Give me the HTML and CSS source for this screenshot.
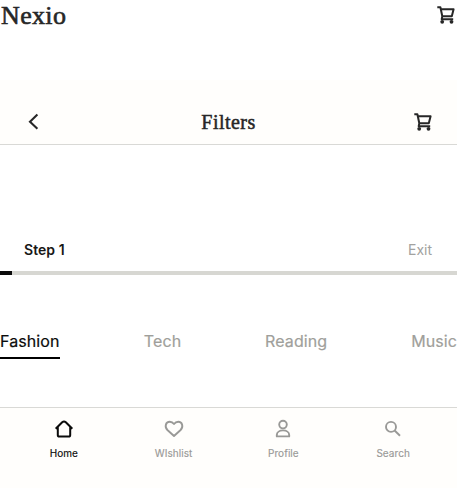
FILE: index.html
```html
<!DOCTYPE html>
<html lang="en">
<head>
<meta charset="utf-8">
<title>Nexio</title>
<link rel="stylesheet" href="styles.css">
</head>
<body>
<svg class="defs" width="0" height="0">
  <symbol id="cart" viewBox="0 0 18 18">
    <path d="M.3 1.2H3.4L5.3 10.3H14.8L16.6 3.2H4M5.3 10.3L4.7 13.2H16.2" fill="none" stroke="currentColor" stroke-width="2" stroke-linejoin="round"/>
    <circle cx="5.2" cy="15.8" r="1.9" fill="currentColor"/>
    <circle cx="14.5" cy="15.8" r="1.9" fill="currentColor"/>
  </symbol>
</svg>
<header class="brand-bar">
  <span class="brand">Nexio</span>
  <svg class="cart"><use href="#cart"/></svg>
</header>
<header class="title-bar">
  <svg class="back" viewBox="0 0 18 18"><path d="M12.4 1.6L5 8.7L12.4 15.8" fill="none" stroke="currentColor" stroke-width="2.1"/></svg>
  <h1 class="title">Filters</h1>
  <svg class="cart"><use href="#cart"/></svg>
</header>
<section class="step">
  <div class="step-row"><span class="step-name">Step 1</span><span class="exit">Exit</span></div>
  <div class="progress"><div class="progress-value"></div></div>
</section>
<nav class="tabs">
  <span class="tab active">Fashion</span>
  <span class="tab">Tech</span>
  <span class="tab">Reading</span>
  <span class="tab">Music</span>
</nav>
<nav class="bottom">
  <div class="item current">
    <svg class="icon" viewBox="0 0 20 20"><path d="M1.7 9.8L8.2 3.3Q10 1.7 11.8 3.3L18.3 9.8M3.8 8V15.9Q3.8 17.5 5.4 17.5H14.6Q16.2 17.5 16.2 15.9V8" stroke-width="2"/></svg>
    <span>Home</span>
  </div>
  <div class="item">
    <svg class="icon" viewBox="0 0 20 20"><path d="M10 17L3.4 11C.4 8 1.5 2.8 5.8 2.8C7.7 2.8 9 3.7 10 5C11 3.7 12.3 2.8 14.2 2.8C18.5 2.8 19.6 8 16.6 11Z"/></svg>
    <span>WIshlist</span>
  </div>
  <div class="item">
    <svg class="icon" viewBox="0 0 20 20"><circle cx="10" cy="5.6" r="3.8"/><path d="M3.8 17.4V16C3.8 13.2 6.6 11.4 10 11.4S16.2 13.2 16.2 16V17.4Z"/></svg>
    <span>Profile</span>
  </div>
  <div class="item">
    <svg class="icon" viewBox="0 0 20 20"><circle cx="8" cy="7.9" r="5"/><path d="M11.6 11.5L17 16.7"/></svg>
    <span>Search</span>
  </div>
</nav>
</body>
</html>
```
FILE: styles.css
```css
* { box-sizing: border-box; }
body { margin: 0; height: 488px; overflow: hidden; display: flex; flex-direction: column; background: #fff; color: #272727; font-family: Inter, sans-serif; }
svg { display: block; flex: none; }
.defs { position: absolute; }
.cart { width: 18px; height: 18px; }
.brand-bar { height: 80px; padding: 0 2px 0 1px; display: flex; justify-content: space-between; align-items: flex-start; }
.brand { font: 500 26px/32px "Liberation Serif", serif; letter-spacing: .35px; -webkit-text-stroke: .6px currentColor; }
.brand-bar .cart { margin-top: 6px; }
.title-bar { height: 65px; padding: 19px 25px 0; display: flex; justify-content: space-between; align-items: center; background: #fffefc; border-bottom: 1px solid #d9d9d6; }
.back { width: 18px; height: 18px; }
.title { margin: 0; font: 500 20px/24px "Liberation Serif", serif; letter-spacing: .45px; -webkit-text-stroke: .5px currentColor; }
.step { padding-top: 95px; }
.step-row { height: 31px; padding: 0 25px 0 24px; display: flex; justify-content: space-between; font-size: 14px; line-height: 20px; }
.step-name { font-weight: 600; color: #171717; letter-spacing: .05px; }
.exit { color: #a2a2a0; }
.progress { height: 4px; background: #d7d7d2; }
.progress-value { width: 11.5px; height: 4px; background: #0b0b0b; }
.tabs { margin-top: 56px; display: flex; justify-content: space-between; font-size: 16px; letter-spacing: .1px; -webkit-text-stroke: .2px currentColor; line-height: 20px; color: #9f9f9b; }
.tab { height: 28px; }
.active { width: 60px; color: #0b0b0b; border-bottom: 2px solid #000; }
.bottom { margin-top: 48px; flex: 1; padding: 11px 9px 0; display: grid; grid-template-columns: repeat(4, 1fr); background: #fffefc; border-top: 1px solid #d9d9d6; }
.item { display: flex; flex-direction: column; align-items: center; gap: 7px; color: #999997; font-size: 10px; letter-spacing: .05px; -webkit-text-stroke: .15px currentColor; line-height: 14px; }
.current { color: #0b0b0b; }
.icon { width: 20px; height: 20px; fill: none; stroke: currentColor; stroke-width: 1.9; stroke-linejoin: round; }
```
